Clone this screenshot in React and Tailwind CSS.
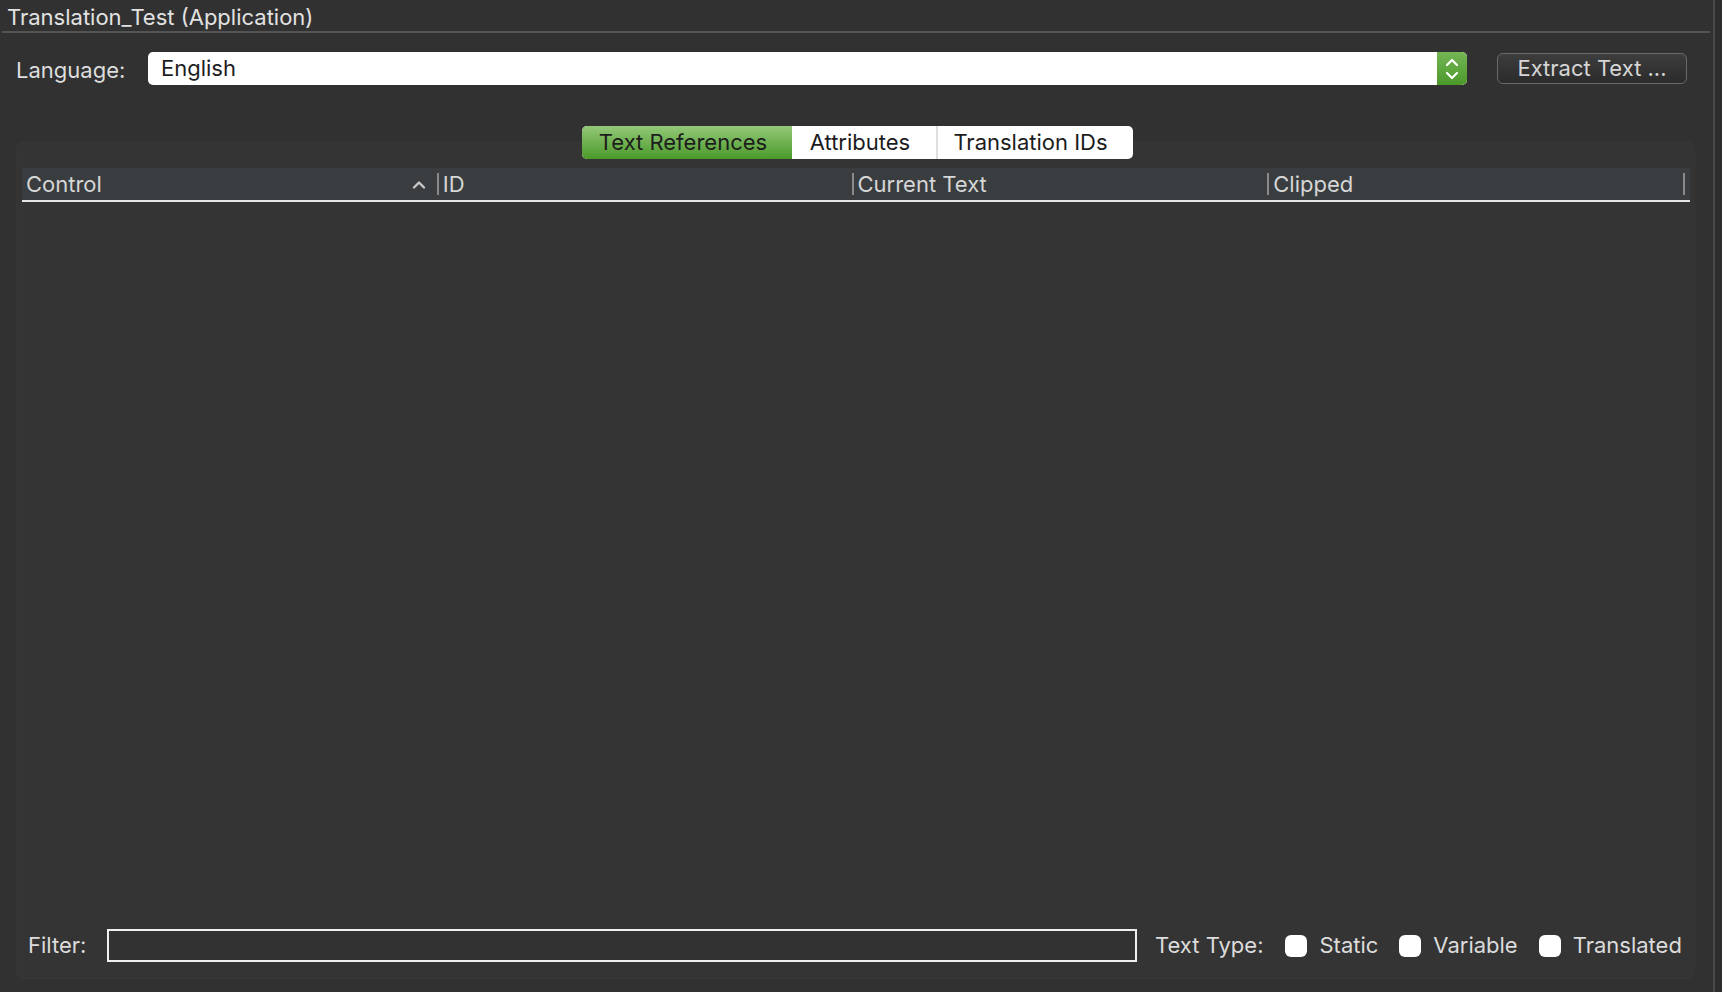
import React from "react";

const font = { fontFamily: "Inter, 'Noto Sans', 'Liberation Sans', sans-serif" };

function Caret() {
  return (
    <svg width="14" height="9" viewBox="0 0 14 9" className="shrink-0">
      <path d="M2 7.5 L7 2.5 L12 7.5" fill="none" stroke="#c8c8c8" strokeWidth="2.4" strokeLinecap="round" strokeLinejoin="round" />
    </svg>
  );
}

function Stepper() {
  return (
    <svg width="16" height="26" viewBox="0 0 16 26">
      <path d="M3 9 L8 4 L13 9" fill="none" stroke="#fff" strokeWidth="2.2" strokeLinecap="round" strokeLinejoin="round" />
      <path d="M3 17 L8 22 L13 17" fill="none" stroke="#fff" strokeWidth="2.2" strokeLinecap="round" strokeLinejoin="round" />
    </svg>
  );
}

function Check({ label }) {
  return (
    <div className="flex items-center">
      <div className="w-[22px] h-[22px] rounded-[6px] bg-white shrink-0" />
      <span className="ml-3 text-[#dcdcdc]">{label}</span>
    </div>
  );
}

function HeaderCol({ label, width, caret, first }) {
  return (
    <div className="flex items-center h-full" style={{ width }}>
      {!first && <div className="w-[2px] h-[22px] bg-[#8a8a8a] shrink-0" />}
      <span className="pl-[4px]">{label}</span>
      {caret && (
        <div className="ml-auto mr-[11px] flex items-center">
          <Caret />
        </div>
      )}
    </div>
  );
}

export default function App() {
  return (
    <div className="w-[1722px] h-[992px] flex bg-[#2e2e2e] overflow-hidden text-[22px]" style={font}>
      <div className="w-[1713px] h-full flex flex-col bg-[#313131]">
        {/* title */}
        <div className="h-[31px] flex items-center pl-[7px] pt-[2px] text-[#e2e2e2] leading-none">
          Translation_Test (Application)
        </div>
        <div className="h-[2px] bg-[#545454] ml-[2px] mr-[3px]" />

        {/* language row */}
        <div className="mt-[19px] flex items-center pl-[16px] pr-[26px]">
          <span className="w-[132px] text-[#dedede] leading-none pt-[3px]">Language:</span>
          <div className="flex-1 h-[33px] flex rounded-[5px] overflow-hidden bg-white">
            <div className="flex-1 flex items-center pl-[13px] text-[#1d1d1d]">English</div>
            <div className="w-[30px] flex items-center justify-center rounded-r-[5px] bg-gradient-to-b from-[#74b655] to-[#4b9828]">
              <Stepper />
            </div>
          </div>
          <div className="ml-[30px] w-[190px] h-[31px] flex items-center justify-center rounded-[6px] border border-[#6b6b6b] bg-gradient-to-b from-[#3d3d3d] to-[#2b2b2b] text-[#d6d6d6]">
            Extract Text ...
          </div>
        </div>

        {/* tabs */}
        <div className="mt-[41px] flex justify-center relative z-10 pl-[1px]">
          <div className="flex h-[33px] rounded-[5px] overflow-hidden bg-white text-[#1c1c1c]">
            <div className="w-[210px] flex items-center justify-center pr-[7px] bg-gradient-to-b from-[#93c877] to-[#4a9a27]">
              Text References
            </div>
            <div className="w-[146px] flex items-center justify-center pr-[7px] border-r-2 border-[#dedede]">
              Attributes
            </div>
            <div className="w-[195px] flex items-center justify-center pr-[9px]">
              Translation IDs
            </div>
          </div>
        </div>

        {/* group box */}
        <div className="mt-[-17px] ml-[16px] mr-[18px] h-[837px] rounded-[6px] bg-[#343434] border border-[#363636] flex flex-col pt-[25px] pl-[5px] pr-[4px] pb-[16px]">
          <div className="h-[34px] flex items-center bg-[#393d40] border-b-2 border-[#e6e6e6] text-[#d6d6d6] pr-[5px]">
            <HeaderCol label="Control" width={415} caret first />
            <HeaderCol label="ID" width={415} />
            <HeaderCol label="Current Text" width={416} />
            <HeaderCol label="Clipped" width={416} />
            <div className="w-[2px] h-[22px] bg-[#8a8a8a] shrink-0" />
          </div>
          <div className="flex-1" />
          <div className="flex items-center pl-[6px] pr-[8px]">
            <span className="w-[79px] text-[#dcdcdc]">Filter:</span>
            <div className="w-[1030px] h-[33px] border-2 border-[#f0f0f0] bg-[#323232]" />
            <span className="ml-[18px] text-[#dcdcdc]">Text Type:</span>
            <div className="ml-[22px] flex items-center gap-[21px]">
              <Check label="Static" />
              <Check label="Variable" />
              <Check label="Translated" />
            </div>
          </div>
        </div>
      </div>
      <div className="w-[2px] h-full bg-[#4a4a4a]" />
      <div className="flex-1 h-full bg-[#2d2d2d]" />
    </div>
  );
}
